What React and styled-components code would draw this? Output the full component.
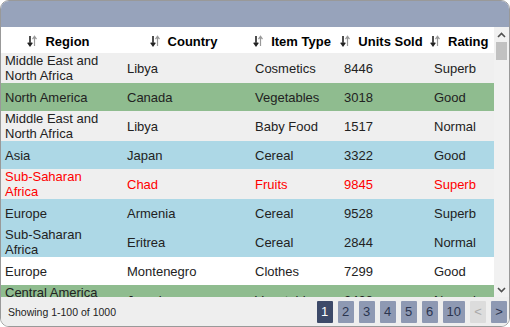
import React from 'react'
import styled, { createGlobalStyle } from 'styled-components'

const GlobalStyle = createGlobalStyle`
  html, body {
    margin: 0;
    padding: 0;
    background: #fff;
  }
  body {
    font-family: "Liberation Sans", Arial, sans-serif;
  }
`

const columns = '122px 128px 89px 90px 1fr'

const Widget = styled.div`
  width: 510px;
  height: 327px;
  box-sizing: border-box;
  border: 1px solid #999;
  border-radius: 9px;
  overflow: hidden;
  display: flex;
  flex-direction: column;
  background: #fff;
`

const TitleBar = styled.div`
  flex: none;
  height: 26px;
  background: #97a3bb;
`

const Holder = styled.div`
  flex: none;
  height: 270px;
  display: flex;
`

const Viewport = styled.div`
  flex: 1;
  min-width: 0;
  overflow: hidden;
`

const ScrollBar = styled.div`
  flex: none;
  width: 15px;
  display: flex;
  flex-direction: column;
  background: #f1f1f1;
`

const ScrollButton = styled.div`
  flex: none;
  height: 15px;
  display: flex;
  align-items: center;
  justify-content: center;
`

const Track = styled.div`
  flex: 1;
  padding: 0 2px;
`

const Thumb = styled.div`
  height: 18px;
  background: #c1c1c1;
`

const HeaderRow = styled.div`
  display: grid;
  grid-template-columns: ${columns};
  height: 26px;
  background: #fff;
`

const HeaderCell = styled.div`
  display: flex;
  align-items: center;
  justify-content: center;
  gap: 8px;
  padding: 2px 7px 0 0;
  font-size: 13px;
  font-weight: bold;
  color: #000;
  white-space: nowrap;
`

const Row = styled.div`
  display: grid;
  grid-template-columns: ${columns};
  min-height: 28px;
  background: ${props => props.$bg};
  color: ${props => (props.$alert ? '#f00' : '#222')};
`

const Cell = styled.div`
  display: flex;
  align-items: center;
  padding: 0 8px 0 4px;
  font-size: 13px;
  line-height: 15px;
`

const Footer = styled.div`
  flex: 1;
  display: flex;
  align-items: center;
  justify-content: space-between;
  padding: 0 2px 0 7px;
  background: #eee;
`

const Summary = styled.span`
  font-size: 10.5px;
  color: #222;
`

const Pager = styled.div`
  display: flex;
  gap: 5px;
`

const PageButton = styled.button`
  height: 22px;
  min-width: 16px;
  padding: 0 4px;
  border: none;
  border-radius: 1px;
  font-family: inherit;
  font-size: 13px;
  background: ${props =>
    props.$active ? '#3d4a69' : props.disabled ? '#dcdcdc' : '#8e99b3'};
  color: ${props =>
    props.$active ? '#fff' : props.disabled ? '#aaa' : '#2b3550'};
`

const SortIcon = () => (
  <svg width="10" height="12" viewBox="0 0 10 12">
    <path d="M3 1v9M0.8 7.6L3 10.6L5.2 7.6" stroke="#222" strokeWidth="1.6" fill="none" />
    <path d="M7.5 11V2M5.5 4.2L7.5 1.4L9.5 4.2" stroke="#999" strokeWidth="1.2" fill="none" />
  </svg>
)

const Chevron = ({ up }) => (
  <svg width="9" height="6" viewBox="0 0 9 6">
    <path
      d={up ? 'M1 5L4.5 1.5L8 5' : 'M1 1L4.5 4.5L8 1'}
      stroke="#505050"
      strokeWidth="1.6"
      fill="none"
    />
  </svg>
)

const headers = ['Region', 'Country', 'Item Type', 'Units Sold', 'Rating']

const rows = [
  ['Middle East and North Africa', 'Libya', 'Cosmetics', 8446, 'Superb'],
  ['North America', 'Canada', 'Vegetables', 3018, 'Good'],
  ['Middle East and North Africa', 'Libya', 'Baby Food', 1517, 'Normal'],
  ['Asia', 'Japan', 'Cereal', 3322, 'Good'],
  ['Sub-Saharan Africa', 'Chad', 'Fruits', 9845, 'Superb'],
  ['Europe', 'Armenia', 'Cereal', 9528, 'Superb'],
  ['Sub-Saharan Africa', 'Eritrea', 'Cereal', 2844, 'Normal'],
  ['Europe', 'Montenegro', 'Clothes', 7299, 'Good'],
  ['Central America and the Caribbean', 'Jamaica', 'Vegetables', 2428, 'Normal'],
]

const rowColour = (item, index) => {
  if (item === 'Vegetables') return '#8fbc8f'
  if (item === 'Cereal') return '#add8e6'
  return index % 2 === 0 ? '#efefef' : '#fff'
}

const pages = ['1', '2', '3', '4', '5', '6', '10']

const App = () => (
  <>
    <GlobalStyle />
    <Widget>
      <TitleBar />
      <Holder>
        <Viewport>
          <HeaderRow>
            {headers.map(title => (
              <HeaderCell key={title}>
                <SortIcon />
                {title}
              </HeaderCell>
            ))}
          </HeaderRow>
          {rows.map((row, index) => (
            <Row key={index} $bg={rowColour(row[2], index)} $alert={row[3] >= 9800}>
              {row.map((value, col) => (
                <Cell key={col}>{value}</Cell>
              ))}
            </Row>
          ))}
        </Viewport>
        <ScrollBar>
          <ScrollButton>
            <Chevron up />
          </ScrollButton>
          <Track>
            <Thumb />
          </Track>
          <ScrollButton>
            <Chevron />
          </ScrollButton>
        </ScrollBar>
      </Holder>
      <Footer>
        <Summary>Showing 1-100 of 1000</Summary>
        <Pager>
          {pages.map(page => (
            <PageButton key={page} $active={page === '1'}>
              {page}
            </PageButton>
          ))}
          <PageButton disabled>&lt;</PageButton>
          <PageButton>&gt;</PageButton>
        </Pager>
      </Footer>
    </Widget>
  </>
)

export default App
